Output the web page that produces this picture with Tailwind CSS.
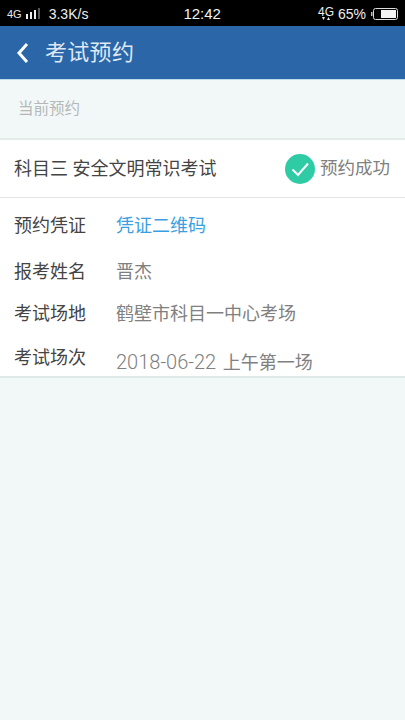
<!DOCTYPE html>
<html lang="zh-CN">
<head>
    <meta charset="UTF-8">
    <meta name="viewport" content="width=device-width, initial-scale=1.0">
    <title>考试预约</title>
    <script src="https://cdn.jsdelivr.net/npm/@tailwindcss/browser@4"></script>
</head>
<body class="bg-[#f2f8f8] font-['Roboto','Noto_Sans_CJK_SC',sans-serif]">
<div class="w-[405px] h-[720px] overflow-hidden flex flex-col">

    <!-- status bar -->
    <div class="h-[26px] bg-black text-white flex items-center pt-[2px] pl-[7px] pr-[7px] shrink-0">
        <span class="text-[11px] font-['Liberation_Sans',sans-serif] text-[#e8e8e8]">4G</span>
        <svg width="16" height="12" viewBox="0 0 16 12" class="ml-[4px]">
            <rect x="0" y="6" width="2" height="5" fill="#eee"/>
            <rect x="4" y="4" width="2" height="7" fill="#eee"/>
            <rect x="8" y="2" width="2" height="9" fill="#eee"/>
            <rect x="12" y="0" width="2" height="11" fill="#555"/>
        </svg>
        <span class="ml-[7px] text-[14px] font-['Liberation_Sans',sans-serif] text-[#eee]">3.3K/s</span>
        <span class="ml-[95px] text-[15px] font-['Liberation_Sans',sans-serif] text-[#f2f2f2]">12:42</span>
        <div class="ml-auto flex items-center">
            <div class="w-[14px] flex flex-col items-center leading-none">
                <span class="text-[12px] leading-[10px] font-['Liberation_Sans',sans-serif] text-[#eee]">4G</span>
                <svg width="10" height="4" viewBox="0 0 10 4"><path d="M1 0h3L2.500 3zM6 3h3L7.500 0z" fill="#eee"/></svg>
            </div>
            <span class="ml-[5px] text-[14px] font-['Liberation_Sans',sans-serif] text-[#eee]">65%</span>
            <svg width="27" height="12" viewBox="0 0 27 12" class="ml-[5px]">
                <rect x="0" y="4" width="1.500" height="4" fill="#bbb"/>
                <rect x="2.500" y="0.500" width="24" height="11" rx="2" fill="none" stroke="#ddd"/>
                <rect x="10" y="2" width="15" height="8" fill="#f4f4f4"/>
            </svg>
        </div>
    </div>

    <!-- header -->
    <div class="h-[54px] bg-[#2a66a8] border-b border-[#bcdcec] flex items-center shrink-0">
        <svg width="14" height="22" viewBox="0 0 14 22" class="ml-[16px]">
            <path d="M11 2 3 11l8 9" fill="none" stroke="#fff" stroke-width="3"/>
        </svg>
        <h1 class="ml-[15px] text-[22px] tracking-[0.3px] text-[#dfe9f3]">考试预约</h1>
    </div>

    <div class="h-[60px] pl-[18px] pt-[2px] flex items-center border-b-2 border-[#e2ece9] text-[15.500px] text-[#b4b9b8] shrink-0">当前预约</div>

    <!-- current booking -->
    <div class="bg-white border-b-2 border-[#dfeae7] shrink-0">
        <div class="h-[58px] pl-[14px] pr-[15px] flex items-center border-b border-[#e4e4e4]">
            <span class="text-[18px] text-[#444]">科目三 安全文明常识考试</span>
            <svg width="30" height="30" viewBox="0 0 30 30" class="ml-auto">
                <circle cx="15" cy="15" r="15" fill="#2fcba5"/>
                <path d="M7.500 15.500 13 21 23 9.500" fill="none" stroke="#fff" stroke-width="2"/>
            </svg>
            <span class="ml-[5px] text-[17.500px] text-[#808080]">预约成功</span>
        </div>
        <div class="pl-[14px] flex flex-col text-[18px] text-[#444]">
            <div class="h-[54px] flex items-center">
                <span class="w-[102px]">预约凭证</span>
                <span class="text-[#3a9fe0]">凭证二维码</span>
            </div>
            <div class="h-[38px] flex items-center">
                <span class="w-[102px]">报考姓名</span>
                <span class="text-[#808080]">晋杰</span>
            </div>
            <div class="h-[46px] flex items-center">
                <span class="w-[102px]">考试场地</span>
                <span class="text-[#808080]">鹤壁市科目一中心考场</span>
            </div>
            <div class="h-[40px] flex items-start">
                <span class="mt-[8px] w-[102px]">考试场次</span>
                <span class="mt-[11px] text-[#808080]"><span class="text-[20px] font-light">2018-06-22</span><span class="ml-[2px]"> 上午第一场</span></span>
            </div>
        </div>
    </div>
</div>
</body>
</html>
